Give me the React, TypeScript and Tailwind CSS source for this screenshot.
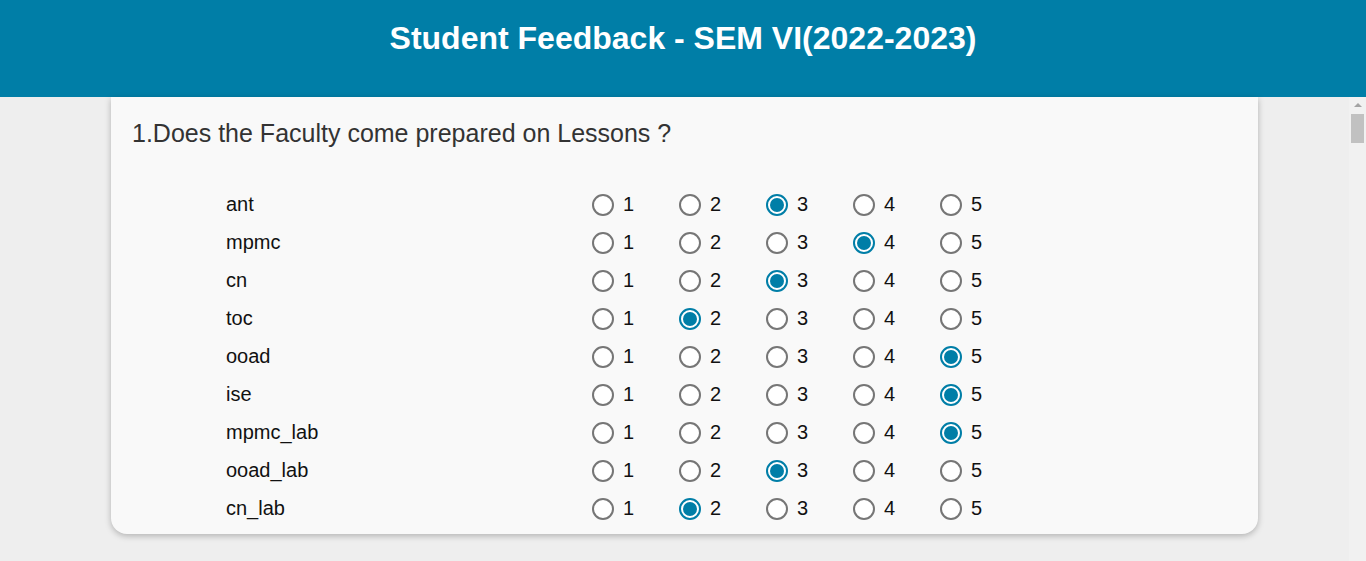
import { useState } from "react";

const subjects = [
  { name: "ant", value: 3 },
  { name: "mpmc", value: 4 },
  { name: "cn", value: 3 },
  { name: "toc", value: 2 },
  { name: "ooad", value: 5 },
  { name: "ise", value: 5 },
  { name: "mpmc_lab", value: 5 },
  { name: "ooad_lab", value: 3 },
  { name: "cn_lab", value: 2 },
];

function Radio({ checked, label, onClick }: { checked: boolean; label: number; onClick: () => void }) {
  return (
    <button type="button" onClick={onClick} className="flex w-[87px] items-center gap-[9px] text-left">
      {checked ? (
        <span className="flex h-[22px] w-[22px] items-center justify-center rounded-full border-2 border-[#007ea7] bg-white">
          <span className="h-[14px] w-[14px] rounded-full bg-[#007ea7]" />
        </span>
      ) : (
        <span className="h-[22px] w-[22px] rounded-full border-2 border-[#767676] bg-white" />
      )}
      <span className="-mt-[3px] text-[20px] text-[#111]">{label}</span>
    </button>
  );
}

export default function App() {
  const [answers, setAnswers] = useState(subjects.map((s) => s.value));

  return (
    <div className="flex h-[561px] flex-col overflow-hidden bg-[#eeeeee] font-['Liberation_Sans',Arial,sans-serif]">
      <header className="flex h-[97px] shrink-0 justify-center bg-[#007ea7] pt-[18px]">
        <h1 className="text-[32px] font-bold leading-[40px] text-white">Student Feedback - SEM VI(2022-2023)</h1>
      </header>

      <div className="flex min-h-0 flex-1">
        <main className="flex-1">
          <section className="ml-[111px] w-[1147px] rounded-b-2xl bg-[#f9f9f9] pb-[7px] pl-[21px] pt-[21px] shadow-[0_2px_6px_rgba(0,0,0,0.25)]">
            <h2 className="text-[25px] leading-[30px] text-[#333]">1.Does the Faculty come prepared on Lessons ?</h2>
            <div className="mt-[37px] pl-[94px]">
              {subjects.map((s, i) => (
                <div key={s.name} className="flex h-[38px] items-center">
                  <span className="w-[366px] text-[20px] text-[#111]">{s.name}</span>
                  <div className="flex pt-[2px]">
                    {[1, 2, 3, 4, 5].map((n) => (
                      <Radio
                        key={n}
                        label={n}
                        checked={answers[i] === n}
                        onClick={() => setAnswers((a) => a.map((v, j) => (j === i ? n : v)))}
                      />
                    ))}
                  </div>
                </div>
              ))}
            </div>
          </section>
        </main>

        <div className="flex w-[17px] shrink-0 flex-col items-center bg-[#f1f1f1]">
          <div className="mt-[6px] h-0 w-0 border-x-[4px] border-b-[4px] border-x-transparent border-b-[#a3a3a3]" />
          <div className="mt-[7px] h-[29px] w-[13px] bg-[#c1c1c1]" />
        </div>
      </div>
    </div>
  );
}
